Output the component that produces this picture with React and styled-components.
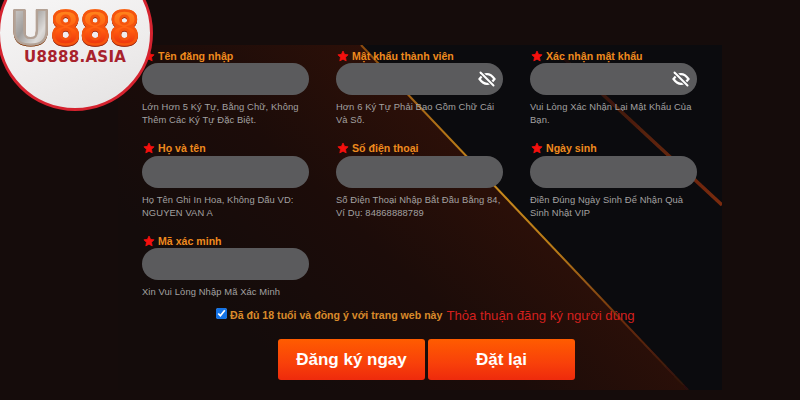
import React from "react";
import styled, { createGlobalStyle } from "styled-components";

const Global = createGlobalStyle`
  html, body { margin: 0; padding: 0; background: #150c0b; }
  body { width: 800px; height: 400px; overflow: hidden; font-family: "Liberation Sans", Arial, sans-serif; }
`;

const Page = styled.div`
  position: relative;
  width: 800px;
  height: 400px;
  box-sizing: border-box;
  padding: 45px 78px 10px 118px;
  background: #150c0b;
  overflow: hidden;
`;

const Panel = styled.main`
  position: relative;
  height: 345px;
  box-sizing: border-box;
  padding: 3px 24px 0;
  background: #0b0b0e;
  overflow: hidden;
`;

const Backdrop = styled.svg`
  position: absolute;
  inset: 0;
  width: 100%;
  height: 100%;
`;

const Content = styled.div`
  position: relative;
`;

const Grid = styled.div`
  display: grid;
  grid-template-columns: repeat(3, 167px);
  grid-template-rows: 92.5px 92.5px 72px;
  column-gap: 27px;
`;

const FieldBox = styled.div`
  display: flex;
  flex-direction: column;
`;

const Label = styled.label`
  display: flex;
  align-items: center;
  gap: 3px;
  height: 15px;
  font-size: 10.6px;
  font-weight: 700;
  color: #ee8a1e;
  margin-left: 1px;
`;

const InputShell = styled.div`
  display: flex;
  align-items: center;
  justify-content: flex-end;
  height: 32px;
  padding-right: 7px;
  box-sizing: border-box;
  border-radius: 16px;
  background: #5b5b5d;
  color: #fff;
`;

const Hint = styled.p`
  margin: 5px 0 0;
  font-size: 9.4px;
  line-height: 13px;
  letter-spacing: 0.1px;
  color: #a3a1a1;
`;

const Agree = styled.div`
  display: flex;
  align-items: center;
  margin-left: 74px;
  height: 20px;
`;

const Check = styled.input`
  width: 11px;
  height: 11px;
  margin: 0 3px 4px 0;
  accent-color: #1473e6;
`;

const AgreeText = styled.span`
  font-size: 10.6px;
  font-weight: 700;
  color: #d98a2a;
  white-space: nowrap;
`;

const AgreeLink = styled.a`
  margin-left: 4px;
  font-size: 13.2px;
  color: #d4201e;
  white-space: nowrap;
`;

const Buttons = styled.div`
  display: flex;
  gap: 3px;
  margin: 14px 0 0 136px;
`;

const Button = styled.button`
  width: 147px;
  height: 41px;
  border: 0;
  border-radius: 3px;
  padding: 0;
  background: linear-gradient(180deg, #ff5c00 0%, #f8400a 60%, #ee2a0c 100%);
  color: #fff;
  font-family: inherit;
  font-size: 17px;
  font-weight: 700;
`;

const Logo = styled.div`
  position: absolute;
  left: -3px;
  top: -45px;
  width: 156px;
  height: 156px;
  box-sizing: border-box;
  border-radius: 50%;
  border: 3px solid #d5232f;
  background: linear-gradient(160deg, #fbfbfb 0%, #efeded 60%, #e4e2e2 100%);
`;

const LogoMark = styled.div`
  position: absolute;
  left: 10px;
  top: 50px;
  display: flex;
  align-items: baseline;
  font-family: "DejaVu Sans", sans-serif;
  font-weight: 700;
  line-height: 40px;
  height: 40px;
`;

const LogoU = styled.span`
  font-size: 47px;
  background: linear-gradient(120deg, #d4d1cf 0%, #a09d9b 40%, #dedbd9 70%, #a9a5a2 100%);
  -webkit-background-clip: text;
  background-clip: text;
  color: transparent;
  -webkit-text-stroke: 2px #b3a296;
  filter: drop-shadow(0 1px 0 #8a4a22);
  transform: scaleX(1.08);
  transform-origin: left;
  margin-right: 3px;
`;

const LogoDigits = styled.span`
  font-size: 44px;
  letter-spacing: 0;
  background: linear-gradient(180deg, #ff8a1e 0%, #ff5a10 55%, #e6260c 100%);
  -webkit-background-clip: text;
  background-clip: text;
  color: transparent;
  -webkit-text-stroke: 2.6px #f5540e;
  filter: drop-shadow(0 1.5px 0 #9a2a10);
  transform: scaleX(0.96);
  transform-origin: left;
`;

const LogoDomain = styled.div`
  position: absolute;
  left: 24px;
  top: 93px;
  font-family: "DejaVu Sans", sans-serif;
  font-size: 15px;
  line-height: 13px;
  font-weight: 700;
  letter-spacing: 0.3px;
  color: #a8222c;
  white-space: nowrap;
`;

const Star = () => (
  <svg width="12" height="12" viewBox="0 0 24 24" aria-hidden="true">
    <path fill="#f5100e" stroke="#f5100e" strokeWidth="1.5" strokeLinejoin="round" d="M12 2l3.1 6.7 7.2 0.9-5.3 5 1.4 7.2L12 18.3l-6.4 3.5 1.4-7.2-5.3-5 7.2-0.9z" />
  </svg>
);

const EyeSlash = () => (
  <svg width="18" height="16" viewBox="0 0 18 16" aria-hidden="true">
    <path d="M1.5 8C4 4.6 6.4 3.2 9 3.2S14 4.6 16.5 8C14 11.4 11.6 12.8 9 12.8S4 11.4 1.5 8Z" fill="none" stroke="#fff" strokeWidth="2.2" />
    <circle cx="9" cy="8" r="1.8" fill="#fff" />
    <path d="M2.5 1.5L15.5 14.5" stroke="#5b5b5d" strokeWidth="4" />
    <path d="M2.5 1.5L15.5 14.5" stroke="#fff" strokeWidth="2" strokeLinecap="round" />
  </svg>
);

const Field = ({ label, hint, secret }) => (
  <FieldBox>
    <Label><Star />{label}</Label>
    <InputShell>{secret && <EyeSlash />}</InputShell>
    <Hint>{hint}</Hint>
  </FieldBox>
);

const fields = [
  { label: "Tên đăng nhập", hint: "Lớn Hơn 5 Ký Tự, Bằng Chữ, Không Thêm Các Ký Tự Đặc Biệt." },
  { label: "Mật khẩu thành viên", hint: "Hơn 6 Ký Tự Phải Bao Gồm Chữ Cái Và Số.", secret: true },
  { label: "Xác nhận mật khẩu", hint: "Vui Lòng Xác Nhận Lại Mật Khẩu Của Bạn.", secret: true },
  { label: "Họ và tên", hint: "Họ Tên Ghi In Hoa, Không Dấu VD: NGUYEN VAN A" },
  { label: "Số điện thoại", hint: "Số Điện Thoại Nhập Bắt Đầu Bằng 84, Ví Dụ: 84868888789" },
  { label: "Ngày sinh", hint: "Điền Đúng Ngày Sinh Để Nhận Quà Sinh Nhật VIP" },
  { label: "Mã xác minh", hint: "Xin Vui Lòng Nhập Mã Xác Minh" },
];

export default function App() {
  return (
    <Page>
      <Global />
      <Panel>
        <Backdrop viewBox="0 0 604 345" preserveAspectRatio="none" aria-hidden="true">
          <defs>
            <linearGradient id="wedge" gradientUnits="userSpaceOnUse" x1="330" y1="60" x2="120" y2="280">
              <stop offset="0" stopColor="#2e1008" />
              <stop offset="0.5" stopColor="#1c0c09" />
              <stop offset="1" stopColor="#140c0b" />
            </linearGradient>
            <linearGradient id="ray" gradientUnits="userSpaceOnUse" x1="243" y1="0" x2="570" y2="345">
              <stop offset="0" stopColor="#8a4a10" />
              <stop offset="0.4" stopColor="#c88a1c" />
              <stop offset="0.6" stopColor="#b87a18" />
              <stop offset="0.8" stopColor="#6a2c0e" />
              <stop offset="1" stopColor="#2a1008" />
            </linearGradient>
            <linearGradient id="ray2" gradientUnits="userSpaceOnUse" x1="440" y1="8" x2="604" y2="160">
              <stop offset="0" stopColor="#170b08" />
              <stop offset="0.6" stopColor="#5e2410" />
              <stop offset="1" stopColor="#7a2a10" />
            </linearGradient>
            <filter id="soft"><feGaussianBlur stdDeviation="0.6" /></filter>
          </defs>
          <path d="M0 0H243L570 345H0Z" fill="url(#wedge)" />
          <path d="M243 0L570 345" stroke="url(#ray)" strokeWidth="2" fill="none" filter="url(#soft)" />
          <path d="M440 8L604 160" stroke="url(#ray2)" strokeWidth="3.5" fill="none" filter="url(#soft)" />
        </Backdrop>
        <Content>
          <Grid>
            {fields.map((f) => <Field key={f.label} {...f} />)}
          </Grid>
          <Agree>
            <Check type="checkbox" defaultChecked readOnly />
            <AgreeText>Đã đủ 18 tuổi và đồng ý với trang web này</AgreeText>
            <AgreeLink>Thỏa thuận đăng ký người dùng</AgreeLink>
          </Agree>
          <Buttons>
            <Button>Đăng ký ngay</Button>
            <Button>Đặt lại</Button>
          </Buttons>
        </Content>
      </Panel>
      <Logo>
        <LogoMark>
          <LogoU>U</LogoU>
          <LogoDigits>888</LogoDigits>
        </LogoMark>
        <LogoDomain>U8888.ASIA</LogoDomain>
      </Logo>
    </Page>
  );
}
